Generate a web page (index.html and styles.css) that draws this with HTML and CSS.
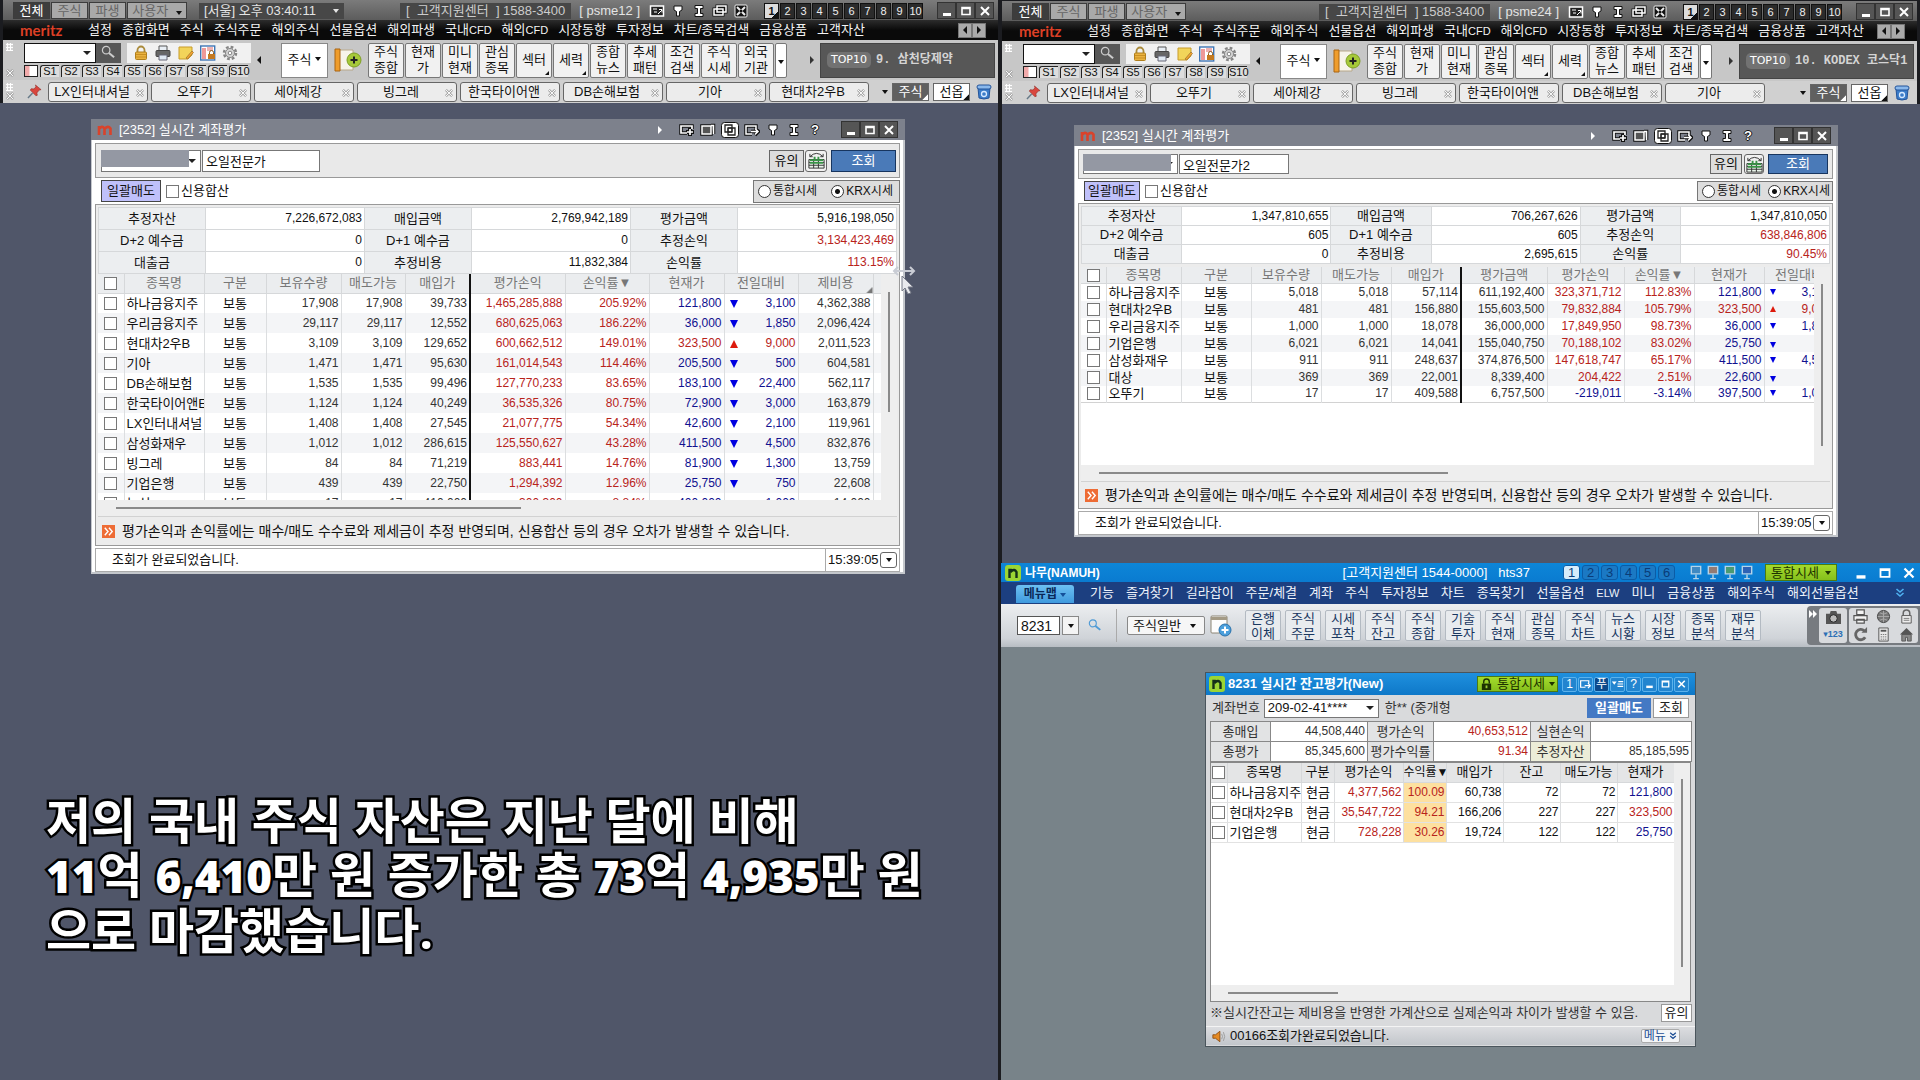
FILE: index.html
```html
<!DOCTYPE html>
<html lang="ko">
<head>
<meta charset="utf-8">
<title>실시간 계좌평가</title>
<link rel="stylesheet" href="styles.css">
</head>
<body>
<svg class="defs" aria-hidden="true">
  <symbol id="search" viewBox="0 0 16 16"><circle cx="5.500" cy="5.500" r="4" fill="none" stroke="currentColor" stroke-width="1.300"/><path d="M8.500 8.500 14 13" stroke="currentColor" stroke-width="2.200"/></symbol>
  <symbol id="lock" viewBox="0 0 16 16"><path d="M4.500 8V5a3.500 3.500 0 0 1 7 0v3" fill="none" stroke="#a98a3a" stroke-width="1.800"/><rect x="2.500" y="7" width="11" height="7.500" rx="1" fill="#e9b23f" stroke="#b07f1c"/><path d="M3 9.500h10M3 12h10" stroke="#c98f22"/></symbol>
  <symbol id="printer" viewBox="0 0 16 16"><path d="M4 1h8v5H4z" fill="#e8eef4" stroke="#555"/><rect x="1" y="5.500" width="14" height="6" rx="1" fill="#666" stroke="#444"/><path d="M4 10h8v5H4z" fill="#dfe8f2" stroke="#667"/></symbol>
  <symbol id="note" viewBox="0 0 16 16"><path d="M1 2h13v8l-4 4H1z" fill="#f2d45a" stroke="#c79b2b"/><path d="m8 13 6-7 1.500 1.500-6 6.500z" fill="#f7a531" stroke="#85622a" stroke-width=".6"/></symbol>
  <symbol id="doclock" viewBox="0 0 16 16"><rect x=".7" y="1" width="14" height="14" fill="#fff" stroke="#3f76b5" stroke-width="1.400"/><path d="M2 3h4v11H2z" fill="#e99"/><path d="M7 3h6M7 5h6" stroke="#d66"/><rect x="8" y="9" width="7" height="5" fill="#c47a21"/><path d="M9.500 9V7.500a2 2 0 0 1 4 0V9" fill="none" stroke="#8a5a1c"/></symbol>
  <symbol id="gear" viewBox="0 0 16 16"><circle cx="8" cy="8" r="6" fill="none" stroke="#858585" stroke-width="2.500" stroke-dasharray="2.700 2"/><circle cx="8" cy="8" r="4.500" fill="#d5d5d5" stroke="#858585"/><circle cx="8" cy="8" r="1.800" fill="#fff" stroke="#858585"/></symbol>
  <symbol id="book" viewBox="0 0 28 24"><path d="M2 2h17v20H2z" fill="#f7f4ea" stroke="#b8a88a"/><path d="M1 1h5v22H1z" fill="#ef9d2c" stroke="#a96512"/><circle cx="20" cy="12" r="7" fill="#a6c939" stroke="#7f9f25"/><path d="M20 8.500v7M16.500 12h7" stroke="#222" stroke-width="2"/></symbol>
  <symbol id="pin" viewBox="0 0 16 16"><path d="m9 1 6 5-2 .5-2.500 3L11 12l-1.500.5-6-6L4.500 5l3 .3L9.500 3z" fill="#d9463d" stroke="#8d2520" stroke-width=".6"/><path d="M6 9.500 1 15" stroke="#677a88" stroke-width="1.500"/></symbol>
  <symbol id="bin" viewBox="0 0 16 16"><path d="M2 4h12l-1 10q-5 2-10 0z" fill="#3b7cc9" stroke="#24549a"/><rect x="1" y="1" width="14" height="4" rx="2" fill="#8bb9ec" stroke="#24549a"/><circle cx="8" cy="10" r="2.500" fill="none" stroke="#d8eaff" stroke-width="1.300"/></symbol>
  <symbol id="cam" viewBox="0 0 16 14"><rect x="1.500" y="2" width="13" height="10" fill="#222" stroke="#fff" stroke-width="1.500"/><path d="M4 5h4M5 8h3M9 10l4-4M10 5.500h3v3" stroke="#fff"/></symbol>
  <symbol id="tack" viewBox="0 0 16 14"><path d="M4 2h8v4L9.500 7.500V12h-3V7.500L4 6z" fill="#fff" stroke="#111"/></symbol>
  <symbol id="tee" viewBox="0 0 16 14"><path d="M4 1.500h8v3H9.500v5H12v3H4v-3h2.500v-5H4z" fill="#fff" stroke="#111"/></symbol>
  <symbol id="copy" viewBox="0 0 16 14"><path d="M5 2h9v6H5zM2 5h9v6H2z" fill="#222" stroke="#111" stroke-width="3"/><path d="M5 2h9v6H5zM2 5h9v6H2z" fill="none" stroke="#fff" stroke-width="1.500"/></symbol>
  <symbol id="fit" viewBox="0 0 16 14"><rect x="2" y="1" width="12" height="12" rx="1" fill="#111" stroke="#eee"/><path d="m4 3 8 8m0-8-8 8" stroke="#eee" stroke-width="2"/><circle cx="8" cy="7" r="1.500" fill="#111"/></symbol>
  <symbol id="winadd" viewBox="0 0 16 14"><path d="M8 10H2V3h11v3" fill="none" stroke="#111" stroke-width="3.500"/><path d="M11 5v8M7 9h8" stroke="#111" stroke-width="4"/><path d="M8 10H2V3h11v3M11 6v6M8 9h6" fill="none" stroke="#fff" stroke-width="1.700"/></symbol>
  <symbol id="winone" viewBox="0 0 16 14"><path d="M2 3h9v8H2zM11 2.500h2.500V11" fill="none" stroke="#111" stroke-width="3.500"/><path d="M2 3h9v8H2zM11 2.500h2.500V11" fill="#555" stroke="#fff" stroke-width="1.500"/></symbol>
  <symbol id="windup" viewBox="0 0 18 16"><rect x=".5" y=".5" width="17" height="15" rx="3" fill="#fff" stroke="#111"/><path d="M4 3h7v7H4zM7 6h7v7H7z" fill="#fff" stroke="#222" stroke-width="1.300"/><path d="M7 6h4v4H7z" fill="none" stroke="#222"/></symbol>
  <symbol id="wingo" viewBox="0 0 16 14"><path d="M8 11H2V3h10v3M7 8.500h7M11 5l3.500 3.500L11 12" fill="none" stroke="#111" stroke-width="3.500"/><path d="M8 11H2V3h10v3M7 8.500h7M11 5.500l3 3-3 3" fill="none" stroke="#fff" stroke-width="1.500"/></symbol>
  <symbol id="goto" viewBox="0 0 16 14"><path d="M8 11H2V3h10v3M7 9h7M11 6l3 3-3 3" fill="none" stroke="#fff" stroke-width="1.500"/></symbol>
  <symbol id="list" viewBox="0 0 16 14"><path d="M1 4h6L4 8z" fill="#fff"/><path d="M9 4h6M8 7h7M8 10h7" stroke="#fff" stroke-width="1.500"/></symbol>
  <symbol id="min" viewBox="0 0 16 14"><path d="M4 10.500h8" stroke="currentColor" stroke-width="3"/></symbol>
  <symbol id="max" viewBox="0 0 16 14"><path d="M4 3.500h8v7H4zM4 4.500h8" fill="none" stroke="currentColor" stroke-width="1.600"/></symbol>
  <symbol id="close" viewBox="0 0 16 14"><path d="m4 3 8 8m0-8-8 8" stroke="currentColor" stroke-width="2"/></symbol>
  <symbol id="calc" viewBox="0 0 20 20"><path d="M2 18V9h16v9z" fill="#e9f4ea" stroke="#333"/><path d="M2 12h16M2 15h16M7 9v9M12 9v9" stroke="#333"/><path d="M3 9.500h14M3 12.500h14" stroke="#3a9448" stroke-width="1.800"/><path d="M3 6q7-7 14 0M3 3v3h3M17 3v3h-3" fill="none" stroke="#333"/><path d="M7 6h2v3H7zM11 6h2v3h-2z" fill="#3a9448"/></symbol>
  <symbol id="next" viewBox="0 0 14 14"><path d="M0 0h14v14H0z" fill="#ee6c35"/><path d="m3 3 3.500 4L3 11M7.500 3 11 7l-3.500 4" fill="none" stroke="#fff" stroke-width="1.500"/></symbol>
  <symbol id="nlogo" viewBox="0 0 16 16"><rect width="16" height="16" rx="3" fill="#9bd534"/><path d="M4.500 13V5h1.500l.5 1q3-2.500 5 1v6" fill="none" stroke="#14301a" stroke-width="2.400"/></symbol>
  <symbol id="mlogo" viewBox="0 0 16 12"><path d="M2 11V2M2 5q3-4 5.500-.5V11M7.500 5q3.500-4 6-.5V11" fill="none" stroke="#d9432b" stroke-width="2.600"/></symbol>
  <symbol id="monitor" viewBox="0 0 14 16"><path d="M2 1.500h10v8H2z" fill="currentColor" stroke="#b5d3e8" stroke-width="1.500"/><path d="M7 10v4M4 14.500h6" stroke="#b5d3e8" stroke-width="1.500"/></symbol>
  <symbol id="winplus" viewBox="0 0 22 22"><rect x="1" y="1" width="16" height="17" rx="1" fill="#fdfdfd" stroke="#8c8575"/><path d="M1 3.500h16" stroke="#a49b86" stroke-width="3"/><circle cx="15" cy="15" r="6" fill="#4b9fdc" stroke="#2b72ab"/><path d="M15 11.500v7M11.500 15h7" stroke="#fff" stroke-width="2"/></symbol>
  <symbol id="camera" viewBox="0 0 18 16"><path d="M1 4h4l1-3h6l1 3h4v11H1z" fill="#555"/><circle cx="9" cy="9" r="4" fill="#bbb" stroke="#222"/></symbol>
  <symbol id="gprint" viewBox="0 0 16 16"><path d="M4 1h8v5H4zM1 7h14v5H1zM4 11h8v4H4z" fill="#f4f4f4" stroke="#555" stroke-width="1.300"/></symbol>
  <symbol id="globe" viewBox="0 0 16 16"><circle cx="8" cy="8" r="6.500" fill="#777" stroke="#444"/><path d="M2 8h12M8 2v12M4 4q4 3 8 0M4 12q4-3 8 0" stroke="#aaa" fill="none"/></symbol>
  <symbol id="glock" viewBox="0 0 16 16"><path d="M4.500 7V4.500a3.500 3.500 0 0 1 7 0V7" fill="none" stroke="#666" stroke-width="1.600"/><path d="M3 7h10v8H3z" fill="#eee" stroke="#555"/><path d="M5 10h6M5 12h6" stroke="#777"/></symbol>
  <symbol id="redo" viewBox="0 0 16 16"><path d="M12 4a5.500 5.500 0 1 0 1 7" fill="none" stroke="#666" stroke-width="3"/><path d="M9 6h6V0z" fill="#666"/></symbol>
  <symbol id="gcalc" viewBox="0 0 16 16"><path d="M3 1h10v14H3z" fill="#e8e8e8" stroke="#555"/><path d="M5 4h6" stroke="#555" stroke-width="2"/><path d="M5 8h6M5 10.500h6M5 13h6" stroke="#777" stroke-dasharray="1.500 .8"/></symbol>
  <symbol id="home" viewBox="0 0 16 16"><path d="m1 8 7-7 7 7z" fill="#555"/><path d="M3 8h10v7H9v-4H7v4H3z" fill="#888" stroke="#555"/></symbol>
  <symbol id="speaker" viewBox="0 0 16 14"><path d="M1 5h3l5-4v12L4 9H1z" fill="#e58a23" stroke="#8a4d12"/><path d="M11 4q2 3 0 6M13 2q3 5 0 10" fill="none" stroke="#999"/></symbol>
  <symbol id="chev" viewBox="0 0 10 10"><path d="m1.500 1 3.500 3 3.500-3M1.500 5 5 8l3.500-3" fill="none" stroke="currentColor" stroke-width="1.600"/></symbol>
  <symbol id="xdots" viewBox="0 0 9 9"><path d="m1 1 7 7m0-7-7 7" stroke="#888" stroke-width="2.600"/><path d="m1 1 7 7m0-7-7 7" stroke="#fff" stroke-width="1.200"/></symbol>
</svg>

<main class="screens">
<!-- Account psme12 -->
<section class="screen meritz">
  <header class="top">
    <div class="tabs"><button class="on">전체</button><button>주식</button><button>파생</button><button class="wide">사용자 <i class="tri"></i></button></div>
    <div class="clock">[서울] 오후 03:40:11 <i class="tri"></i></div>
    <div class="support"><span class="box">[ &nbsp;고객지원센터&nbsp; ] 1588-3400</span><span>[ psme12 ]</span></div>
    <div class="sysicons"><svg><use href="#cam"/></svg><svg><use href="#tack"/></svg><svg><use href="#tee"/></svg><svg><use href="#copy"/></svg><svg><use href="#fit"/></svg></div>
    <div class="pages"><button class="on">1</button><button>2</button><button>3</button><button>4</button><button>5</button><button>6</button><button>7</button><button>8</button><button>9</button><button>10</button></div>
    <div class="winbtns"><button aria-label="최소화"><svg><use href="#min"/></svg></button><button aria-label="최대화"><svg><use href="#max"/></svg></button><button aria-label="닫기"><svg><use href="#close"/></svg></button></div>
  </header>
  <nav class="menu"><b class="brand">meritz</b><a href="#">설정</a><a href="#">종합화면</a><a href="#">주식</a><a href="#">주식주문</a><a href="#">해외주식</a><a href="#">선물옵션</a><a href="#">해외파생</a><a href="#">국내<span class="en">CFD</span></a><a href="#">해외<span class="en">CFD</span></a><a href="#">시장동향</a><a href="#">투자정보</a><a href="#">차트/종목검색</a><a href="#">금융상품</a><a href="#">고객자산</a><span class="pager"><button aria-label="이전"><i class="tri left"></i></button><button aria-label="다음"><i class="tri right"></i></button></span></nav>
  <div class="tools">
    <span class="grip"><svg><use href="#xdots"/></svg></span>
    <div class="finder">
      <div class="find"><select aria-label="화면번호"><option></option></select><button class="go" aria-label="검색"><svg><use href="#search"/></svg></button><span class="quick"><svg><use href="#lock"/></svg><svg><use href="#printer"/></svg><svg><use href="#note"/></svg><svg><use href="#doclock"/></svg><svg><use href="#gear"/></svg></span></div>
      <div class="slots"><i class="panes"></i><button>S1</button><button>S2</button><button>S3</button><button>S4</button><button>S5</button><button>S6</button><button>S7</button><button>S8</button><button>S9</button><button>S10</button></div>
    </div>
    <i class="tri left fold"></i>
    <button class="cat">주식<i class="tri"></i></button>
    <svg class="book"><use href="#book"/></svg>
    <div class="keys"><button>주식<br>종합</button><button>현재<br>가</button><button>미니<br>현재</button><button>관심<br>종목</button><button class="more">섹터</button><button class="more">세력</button><button>종합<br>뉴스</button><button>추세<br>패턴</button><button>조건<br>검색</button><button>주식<br>시세</button><button>외국<br>기관</button><button class="drop" aria-label="더보기"><i class="tri"></i></button></div>
    <i class="tri right unfold"></i>
    <div class="rank"><span>TOP10</span><b>9. 삼천당제약</b></div>
  </div>
  <div class="stocks">
    <span class="grip"><svg><use href="#xdots"/></svg></span><svg class="pin"><use href="#pin"/></svg>
    <div class="chips"><button>LX인터내셔널<svg><use href="#xdots"/></svg></button><button>오뚜기<svg><use href="#xdots"/></svg></button><button>세아제강<svg><use href="#xdots"/></svg></button><button>빙그레<svg><use href="#xdots"/></svg></button><button>한국타이어앤<svg><use href="#xdots"/></svg></button><button>DB손해보험<svg><use href="#xdots"/></svg></button><button>기아<svg><use href="#xdots"/></svg></button><button>현대차2우B<svg><use href="#xdots"/></svg></button></div>
    <span class="modes"><i class="tri"></i><button class="dark">주식</button><button>선옵</button><svg><use href="#bin"/></svg></span>
  </div>
  <div class="desk">
    <section class="win win-a">
      <header class="title"><svg class="m"><use href="#mlogo"/></svg><h2>[2352] 실시간 계좌평가</h2><i class="tri right"></i><span class="wicons"><svg><use href="#winadd"/></svg><svg><use href="#winone"/></svg><svg><use href="#windup"/></svg><svg><use href="#wingo"/></svg><svg><use href="#tack"/></svg><svg><use href="#tee"/></svg><b>?</b></span><span class="winbtns"><button aria-label="최소화"><svg><use href="#min"/></svg></button><button aria-label="최대화"><svg><use href="#max"/></svg></button><button aria-label="닫기"><svg><use href="#close"/></svg></button></span></header>
      <div class="body">
        <div class="acct"><span class="masked"><select aria-label="계좌"><option></option></select></span><input type="text" aria-label="계좌명" value="오일전문가"><span class="push"></span><button>유의</button><button class="ico" aria-label="계산"><svg><use href="#calc"/></svg></button><button class="query">조회</button></div>
        <div class="opts"><button class="sell">일괄매도</button><label><input type="checkbox">신용합산</label><span class="push"></span><span class="quote"><label><input type="radio" name="qa">통합시세</label><label><input type="radio" name="qa" checked>KRX시세</label></span></div>
        <div class="data">
          <table class="sum">
            <tr><th>추정자산</th><td>7,226,672,083</td><th>매입금액</th><td>2,769,942,189</td><th>평가금액</th><td>5,916,198,050</td></tr>
            <tr><th>D+2 예수금</th><td>0</td><th>D+1 예수금</th><td>0</td><th>추정손익</th><td class="r">3,134,423,469</td></tr>
            <tr><th>대출금</th><td>0</td><th>추정비용</th><td>11,832,384</td><th>손익률</th><td class="r">113.15%</td></tr>
          </table>
          <div class="pane">
            <div class="view">
              <table class="list">
                <colgroup><col class="w26"><col class="w80"><col class="w62"><col class="w75"><col class="w64"><col class="w65"><col class="w95"><col class="w84"><col class="w75"><col class="w74"><col class="w75"><col class="w26"></colgroup>
                <thead><tr><th><input type="checkbox" aria-label="전체"></th><th>종목명</th><th>구분</th><th>보유수량</th><th>매도가능</th><th class="edge">매입가</th><th>평가손익</th><th>손익률▼</th><th>현재가</th><th>전일대비</th><th class="fold-mark">제비용</th><th></th></tr></thead>
                <tbody>
                <tr><td><input type="checkbox" aria-label="선택"></td><td>하나금융지주</td><td>보통</td><td>17,908</td><td>17,908</td><td class="edge">39,733</td><td class="r">1,465,285,888</td><td class="r">205.92%</td><td class="b">121,800</td><td class="b"><i class="dn"></i>3,100</td><td>4,362,388</td><td></td></tr>
                <tr><td><input type="checkbox" aria-label="선택"></td><td>우리금융지주</td><td>보통</td><td>29,117</td><td>29,117</td><td class="edge">12,552</td><td class="r">680,625,063</td><td class="r">186.22%</td><td class="b">36,000</td><td class="b"><i class="dn"></i>1,850</td><td>2,096,424</td><td></td></tr>
                <tr><td><input type="checkbox" aria-label="선택"></td><td>현대차2우B</td><td>보통</td><td>3,109</td><td>3,109</td><td class="edge">129,652</td><td class="r">600,662,512</td><td class="r">149.01%</td><td class="r">323,500</td><td class="r"><i class="up"></i>9,000</td><td>2,011,523</td><td></td></tr>
                <tr><td><input type="checkbox" aria-label="선택"></td><td>기아</td><td>보통</td><td>1,471</td><td>1,471</td><td class="edge">95,630</td><td class="r">161,014,543</td><td class="r">114.46%</td><td class="b">205,500</td><td class="b"><i class="dn"></i>500</td><td>604,581</td><td></td></tr>
                <tr><td><input type="checkbox" aria-label="선택"></td><td>DB손해보험</td><td>보통</td><td>1,535</td><td>1,535</td><td class="edge">99,496</td><td class="r">127,770,233</td><td class="r">83.65%</td><td class="b">183,100</td><td class="b"><i class="dn"></i>22,400</td><td>562,117</td><td></td></tr>
                <tr><td><input type="checkbox" aria-label="선택"></td><td>한국타이어앤E</td><td>보통</td><td>1,124</td><td>1,124</td><td class="edge">40,249</td><td class="r">36,535,326</td><td class="r">80.75%</td><td class="b">72,900</td><td class="b"><i class="dn"></i>3,000</td><td>163,879</td><td></td></tr>
                <tr><td><input type="checkbox" aria-label="선택"></td><td>LX인터내셔널</td><td>보통</td><td>1,408</td><td>1,408</td><td class="edge">27,545</td><td class="r">21,077,775</td><td class="r">54.34%</td><td class="b">42,600</td><td class="b"><i class="dn"></i>2,100</td><td>119,961</td><td></td></tr>
                <tr><td><input type="checkbox" aria-label="선택"></td><td>삼성화재우</td><td>보통</td><td>1,012</td><td>1,012</td><td class="edge">286,615</td><td class="r">125,550,627</td><td class="r">43.28%</td><td class="b">411,500</td><td class="b"><i class="dn"></i>4,500</td><td>832,876</td><td></td></tr>
                <tr><td><input type="checkbox" aria-label="선택"></td><td>빙그레</td><td>보통</td><td>84</td><td>84</td><td class="edge">71,219</td><td class="r">883,441</td><td class="r">14.76%</td><td class="b">81,900</td><td class="b"><i class="dn"></i>1,300</td><td>13,759</td><td></td></tr>
                <tr><td><input type="checkbox" aria-label="선택"></td><td>기업은행</td><td>보통</td><td>439</td><td>439</td><td class="edge">22,750</td><td class="r">1,294,392</td><td class="r">12.96%</td><td class="b">25,750</td><td class="b"><i class="dn"></i>750</td><td>22,608</td><td></td></tr>
                <tr><td><input type="checkbox" aria-label="선택"></td><td>농심</td><td>보통</td><td>17</td><td>17</td><td class="edge">410,000</td><td class="r">300,300</td><td class="r">8.84%</td><td class="b">400,000</td><td class="b"><i class="dn"></i>1,000</td><td>14,000</td><td></td></tr>
                </tbody>
              </table>
            </div>
            <i class="vbar"></i><i class="hbar"></i>
          </div>
          <p class="notice"><svg><use href="#next"/></svg>평가손익과 손익률에는 매수/매도 수수료와 제세금이 추정 반영되며, 신용합산 등의 경우 오차가 발생할 수 있습니다.</p>
        </div>
        <footer class="status"><span>조회가 완료되었습니다.</span><time>15:39:05<button aria-label="기록"><i class="tri"></i></button></time></footer>
      </div>
      <svg class="cursor" viewBox="0 0 24 28"><path d="M2 5h20M6 1 2 5l4 4M18 1l4 4-4 4" fill="none" stroke="#c9ccd4" stroke-width="2"/><path d="M10 10v15l3-3 3 6 3-1-3-6h5z" fill="#e9eaee" stroke="#777b88"/></svg>
    </section>
    <p class="caption">저의 국내 주식 자산은 지난 달에 비해<br><span>11</span>억 <span>6,410</span>만 원 증가한 총 <span>73</span>억 <span>4,935</span>만 원<br>으로 마감했습니다.</p>
  </div>
</section>

<div class="right">
<!-- Account psme24 -->
<section class="screen meritz">
  <header class="top">
    <div class="tabs"><button class="on">전체</button><button>주식</button><button>파생</button><button class="wide">사용자 <i class="tri"></i></button></div>
    <div class="support"><span class="box">[ &nbsp;고객지원센터&nbsp; ] 1588-3400</span><span>[ psme24 ]</span></div>
    <div class="sysicons"><svg><use href="#cam"/></svg><svg><use href="#tack"/></svg><svg><use href="#tee"/></svg><svg><use href="#copy"/></svg><svg><use href="#fit"/></svg></div>
    <div class="pages"><button class="on">1</button><button>2</button><button>3</button><button>4</button><button>5</button><button>6</button><button>7</button><button>8</button><button>9</button><button>10</button></div>
    <div class="winbtns"><button aria-label="최소화"><svg><use href="#min"/></svg></button><button aria-label="최대화"><svg><use href="#max"/></svg></button><button aria-label="닫기"><svg><use href="#close"/></svg></button></div>
  </header>
  <nav class="menu"><b class="brand">meritz</b><a href="#">설정</a><a href="#">종합화면</a><a href="#">주식</a><a href="#">주식주문</a><a href="#">해외주식</a><a href="#">선물옵션</a><a href="#">해외파생</a><a href="#">국내<span class="en">CFD</span></a><a href="#">해외<span class="en">CFD</span></a><a href="#">시장동향</a><a href="#">투자정보</a><a href="#">차트/종목검색</a><a href="#">금융상품</a><a href="#">고객자산</a><span class="pager"><button aria-label="이전"><i class="tri left"></i></button><button aria-label="다음"><i class="tri right"></i></button></span></nav>
  <div class="tools">
    <span class="grip"><svg><use href="#xdots"/></svg></span>
    <div class="finder">
      <div class="find"><select aria-label="화면번호"><option></option></select><button class="go" aria-label="검색"><svg><use href="#search"/></svg></button><span class="quick"><svg><use href="#lock"/></svg><svg><use href="#printer"/></svg><svg><use href="#note"/></svg><svg><use href="#doclock"/></svg><svg><use href="#gear"/></svg></span></div>
      <div class="slots"><i class="panes"></i><button>S1</button><button>S2</button><button>S3</button><button>S4</button><button>S5</button><button>S6</button><button>S7</button><button>S8</button><button>S9</button><button>S10</button></div>
    </div>
    <i class="tri left fold"></i>
    <button class="cat">주식<i class="tri"></i></button>
    <svg class="book"><use href="#book"/></svg>
    <div class="keys"><button>주식<br>종합</button><button>현재<br>가</button><button>미니<br>현재</button><button>관심<br>종목</button><button class="more">섹터</button><button class="more">세력</button><button>종합<br>뉴스</button><button>추세<br>패턴</button><button>조건<br>검색</button><button class="drop" aria-label="더보기"><i class="tri"></i></button></div>
    <i class="tri right unfold"></i>
    <div class="rank"><span>TOP10</span><b>10. KODEX 코스닥1</b></div>
  </div>
  <div class="stocks">
    <span class="grip"><svg><use href="#xdots"/></svg></span><svg class="pin"><use href="#pin"/></svg>
    <div class="chips"><button>LX인터내셔널<svg><use href="#xdots"/></svg></button><button>오뚜기<svg><use href="#xdots"/></svg></button><button>세아제강<svg><use href="#xdots"/></svg></button><button>빙그레<svg><use href="#xdots"/></svg></button><button>한국타이어앤<svg><use href="#xdots"/></svg></button><button>DB손해보험<svg><use href="#xdots"/></svg></button><button>기아<svg><use href="#xdots"/></svg></button></div>
    <span class="modes"><i class="tri"></i><button class="dark">주식</button><button>선옵</button><svg><use href="#bin"/></svg></span>
  </div>
  <div class="desk">
    <section class="win win-b">
      <header class="title"><svg class="m"><use href="#mlogo"/></svg><h2>[2352] 실시간 계좌평가</h2><i class="tri right"></i><span class="wicons"><svg><use href="#winadd"/></svg><svg><use href="#winone"/></svg><svg><use href="#windup"/></svg><svg><use href="#wingo"/></svg><svg><use href="#tack"/></svg><svg><use href="#tee"/></svg><b>?</b></span><span class="winbtns"><button aria-label="최소화"><svg><use href="#min"/></svg></button><button aria-label="최대화"><svg><use href="#max"/></svg></button><button aria-label="닫기"><svg><use href="#close"/></svg></button></span></header>
      <div class="body">
        <div class="acct"><span class="masked"><select aria-label="계좌"><option></option></select></span><input type="text" aria-label="계좌명" value="오일전문가2"><span class="push"></span><button>유의</button><button class="ico" aria-label="계산"><svg><use href="#calc"/></svg></button><button class="query">조회</button></div>
        <div class="opts"><button class="sell">일괄매도</button><label><input type="checkbox">신용합산</label><span class="push"></span><span class="quote"><label><input type="radio" name="qb">통합시세</label><label><input type="radio" name="qb" checked>KRX시세</label></span></div>
        <div class="data">
          <table class="sum">
            <tr><th>추정자산</th><td>1,347,810,655</td><th>매입금액</th><td>706,267,626</td><th>평가금액</th><td>1,347,810,050</td></tr>
            <tr><th>D+2 예수금</th><td>605</td><th>D+1 예수금</th><td>605</td><th>추정손익</th><td class="r">638,846,806</td></tr>
            <tr><th>대출금</th><td>0</td><th>추정비용</th><td>2,695,615</td><th>손익률</th><td class="r">90.45%</td></tr>
          </table>
          <div class="pane">
            <div class="view">
              <table class="list">
                <colgroup><col class="w25"><col class="w75"><col class="w70"><col class="w70"><col class="w70"><col class="w70"><col class="w86"><col class="w77"><col class="w70"><col class="w70"><col class="w70"></colgroup>
                <thead><tr><th><input type="checkbox" aria-label="전체"></th><th>종목명</th><th>구분</th><th>보유수량</th><th>매도가능</th><th class="edge">매입가</th><th>평가금액</th><th>평가손익</th><th>손익률▼</th><th>현재가</th><th>전일대비</th></tr></thead>
                <tbody>
                <tr><td><input type="checkbox" aria-label="선택"></td><td>하나금융지주</td><td>보통</td><td>5,018</td><td>5,018</td><td class="edge">57,114</td><td>611,192,400</td><td class="r">323,371,712</td><td class="r">112.83%</td><td class="b">121,800</td><td class="b"><i class="dn"></i>3,100</td></tr>
                <tr><td><input type="checkbox" aria-label="선택"></td><td>현대차2우B</td><td>보통</td><td>481</td><td>481</td><td class="edge">156,880</td><td>155,603,500</td><td class="r">79,832,884</td><td class="r">105.79%</td><td class="r">323,500</td><td class="r"><i class="up"></i>9,000</td></tr>
                <tr><td><input type="checkbox" aria-label="선택"></td><td>우리금융지주</td><td>보통</td><td>1,000</td><td>1,000</td><td class="edge">18,078</td><td>36,000,000</td><td class="r">17,849,950</td><td class="r">98.73%</td><td class="b">36,000</td><td class="b"><i class="dn"></i>1,850</td></tr>
                <tr><td><input type="checkbox" aria-label="선택"></td><td>기업은행</td><td>보통</td><td>6,021</td><td>6,021</td><td class="edge">14,041</td><td>155,040,750</td><td class="r">70,188,102</td><td class="r">83.02%</td><td class="b">25,750</td><td class="b"><i class="dn"></i></td></tr>
                <tr><td><input type="checkbox" aria-label="선택"></td><td>삼성화재우</td><td>보통</td><td>911</td><td>911</td><td class="edge">248,637</td><td>374,876,500</td><td class="r">147,618,747</td><td class="r">65.17%</td><td class="b">411,500</td><td class="b"><i class="dn"></i>4,500</td></tr>
                <tr><td><input type="checkbox" aria-label="선택"></td><td>대상</td><td>보통</td><td>369</td><td>369</td><td class="edge">22,001</td><td>8,339,400</td><td class="r">204,422</td><td class="r">2.51%</td><td class="b">22,600</td><td class="b"><i class="dn"></i></td></tr>
                <tr><td><input type="checkbox" aria-label="선택"></td><td>오뚜기</td><td>보통</td><td>17</td><td>17</td><td class="edge">409,588</td><td>6,757,500</td><td class="b">-219,011</td><td class="b">-3.14%</td><td class="b">397,500</td><td class="b"><i class="dn"></i>1,000</td></tr>
                </tbody>
              </table>
            </div>
            <i class="vbar"></i><i class="hbar"></i>
          </div>
          <p class="notice"><svg><use href="#next"/></svg>평가손익과 손익률에는 매수/매도 수수료와 제세금이 추정 반영되며, 신용합산 등의 경우 오차가 발생할 수 있습니다.</p>
        </div>
        <footer class="status"><span>조회가 완료되었습니다.</span><time>15:39:05<button aria-label="기록"><i class="tri"></i></button></time></footer>
      </div>
    </section>
  </div>
</section>

<!-- Namuh account -->
<section class="screen namuh">
  <header class="ntop"><svg class="logo"><use href="#nlogo"/></svg><h1>나무(NAMUH)</h1><span class="line">[고객지원센터 1544-0000] &nbsp; hts37</span>
    <div class="npages"><button class="on">1</button><button>2</button><button>3</button><button>4</button><button>5</button><button>6</button></div>
    <div class="mons"><svg class="m1"><use href="#monitor"/></svg><svg class="m2"><use href="#monitor"/></svg><svg class="m3"><use href="#monitor"/></svg><svg class="m4"><use href="#monitor"/></svg></div>
    <button class="green">통합시세<i class="tri"></i></button>
    <div class="nbtns"><button aria-label="최소화"><svg><use href="#min"/></svg></button><button aria-label="최대화"><svg><use href="#max"/></svg></button><button aria-label="닫기"><svg><use href="#close"/></svg></button></div>
  </header>
  <nav class="nmenu"><button>메뉴맵 <i class="tri"></i></button><a href="#">기능</a><a href="#">즐겨찾기</a><a href="#">길라잡이</a><a href="#">주문/체결</a><a href="#">계좌</a><a href="#">주식</a><a href="#">투자정보</a><a href="#">차트</a><a href="#">종목찾기</a><a href="#">선물옵션</a><a href="#"><span class="en">ELW</span></a><a href="#">미니</a><a href="#">금융상품</a><a href="#">해외주식</a><a href="#">해외선물옵션</a><svg><use href="#chev"/></svg></nav>
  <div class="ntools">
    <input class="code" type="text" aria-label="화면번호" value="8231"><button class="drop" aria-label="목록"><i class="tri"></i></button><svg class="mag"><use href="#search"/></svg>
    <i class="sep"></i>
    <button class="ncat">주식일반<i class="tri"></i></button><svg class="np"><use href="#winplus"/></svg>
    <div class="nkeys"><button>은행<br>이체</button><button>주식<br>주문</button><button>시세<br>포착</button><button>주식<br>잔고</button><button>주식<br>종합</button><button>기술<br>투자</button><button>주식<br>현재</button><button>관심<br>종목</button><button>주식<br>차트</button><button>뉴스<br>시황</button><button>시장<br>정보</button><button>종목<br>분석</button><button>재무<br>분석</button></div>
    <div class="dock"><span class="ff"><i class="tri right"></i><i class="tri right"></i></span><span class="d1"><svg><use href="#camera"/></svg><b>▾123</b></span><span class="d2"><svg><use href="#gprint"/></svg><svg><use href="#globe"/></svg><svg><use href="#glock"/></svg><svg><use href="#redo"/></svg><svg><use href="#gcalc"/></svg><svg><use href="#home"/></svg></span></div>
  </div>
  <div class="desk">
    <section class="win win-c">
      <header class="ctitle"><svg class="logo"><use href="#nlogo"/></svg><h2>8231 실시간 잔고평가(New)</h2><button class="green"><svg viewBox="0 0 14 14"><path d="M4 6V4a3 3 0 0 1 6 0v2" fill="none" stroke="#1d3300" stroke-width="1.500"/><path d="M2 6h10v7H2z" fill="#1d3300"/><path d="M7 8v3" stroke="#9c3" stroke-width="2"/></svg>통합시세<i class="tri"></i></button>
        <span class="cbtns"><button>1</button><button aria-label="이동"><svg><use href="#goto"/></svg></button><button class="on">푸</button><button aria-label="목록"><svg><use href="#list"/></svg></button><button>?</button><button aria-label="최소화"><svg><use href="#min"/></svg></button><button aria-label="최대화"><svg><use href="#max"/></svg></button><button aria-label="닫기"><svg><use href="#close"/></svg></button></span></header>
      <div class="cacct"><label for="acc">계좌번호</label><select id="acc"><option>209-02-41****</option></select><span class="owner">한** (중개형</span><span class="push"></span><button class="csell">일괄매도</button><button class="plain">조회</button></div>
      <table class="csum">
        <colgroup><col class="p1"><col class="p2"><col class="p3"><col class="p2"><col class="p1"><col class="p4"></colgroup>
        <tr><th>총매입</th><td>44,508,440</td><th>평가손익</th><td class="r">40,653,512</td><th>실현손익</th><td></td></tr>
        <tr><th>총평가</th><td>85,345,600</td><th>평가수익률</th><td class="r">91.34</td><th class="mark">추정자산</th><td>85,185,595</td></tr>
      </table>
      <div class="pane">
        <div class="view">
          <table class="list">
            <colgroup><col class="w16"><col class="w74"><col class="w33"><col class="w69"><col class="w43"><col class="w57"><col class="w57"><col class="w57"><col class="w57"></colgroup>
            <thead><tr><th><input type="checkbox" aria-label="전체"></th><th>종목명</th><th>구분</th><th>평가손익</th><th class="tight">수익률▼</th><th>매입가</th><th>잔고</th><th>매도가능</th><th>현재가</th></tr></thead>
            <tbody>
            <tr><td><input type="checkbox" aria-label="선택"></td><td>하나금융지주</td><td>현금</td><td class="r">4,377,562</td><td class="r hot">100.09</td><td>60,738</td><td>72</td><td>72</td><td class="b">121,800</td></tr>
            <tr><td><input type="checkbox" aria-label="선택"></td><td>현대차2우B</td><td>현금</td><td class="r">35,547,722</td><td class="r hot">94.21</td><td>166,206</td><td>227</td><td>227</td><td class="r">323,500</td></tr>
            <tr><td><input type="checkbox" aria-label="선택"></td><td>기업은행</td><td>현금</td><td class="r">728,228</td><td class="r hot">30.26</td><td>19,724</td><td>122</td><td>122</td><td class="b">25,750</td></tr>
            </tbody>
          </table>
        </div>
        <i class="vbar"></i><i class="hbar"></i>
      </div>
      <p class="cnote"><span>※실시간잔고는 제비용을 반영한 가계산으로 실제손익과 차이가 발생할 수 있음.</span><button class="plain">유의</button></p>
      <footer class="cstatus"><svg><use href="#speaker"/></svg>00166조회가완료되었습니다.<span class="push"></span><button>메뉴 <svg><use href="#chev"/></svg></button></footer>
    </section>
  </div>
</section>
</div>
</main>
</body>
</html>
```
FILE: styles.css
```css
* { box-sizing: border-box; }
body {
  margin: 0;
  background: #1b1c20;
  color: #111;
  font: 13px/16px "Liberation Sans", "Noto Sans CJK KR", sans-serif;
}
button, input, select { font: inherit; color: inherit; margin: 0; padding: 0; border-radius: 0; }
button { border: 1px solid #666; background: #eee; white-space: nowrap; }
a { color: inherit; text-decoration: none; }
h1, h2, p { margin: 0; font-size: inherit; font-weight: normal; }
svg { flex: none; }
.defs { display: none; }
.push { flex: 1; }
.en { font-size: 11px; }

.tri { display: inline-block; flex: none; border: 3px solid transparent; border-top: 4px solid currentColor; border-bottom: 0; }
.tri.left { border: 4px solid transparent; border-right-color: currentColor; border-left: 0; }
.tri.right { border: 4px solid transparent; border-left-color: currentColor; border-right: 0; }

input[type=checkbox], input[type=radio] { appearance: none; flex: none; width: 13px; height: 13px; border: 1px solid #777; background: #fff; display: block; }
input[type=radio] { border-radius: 50%; border-color: #333; }
input[type=radio]:checked { background: radial-gradient(#111 2px, #fff 3px); }
select {
  appearance: none;
  border: 1px solid #777;
  background: #fff url("data:image/svg+xml,%3Csvg xmlns='http://www.w3.org/2000/svg' width='15' height='8'%3E%3Cpath d='M3 2h8l-4 4z' fill='%23222'/%3E%3C/svg%3E") right center no-repeat;
}

.screens { display: grid; grid-template-columns: 1001fr 919fr; min-height: 100vh; }
.right { display: grid; grid-template-rows: 563fr 517fr; }
.screen { display: flex; flex-direction: column; min-width: 0; }
.meritz { padding: 0 3px; }
.right .meritz { padding: 1px 3px 0 1px; }
.desk { position: relative; flex: 1; background: #505669; }
.meritz .desk { margin: 0 0 0 -3px; }
.right .meritz .desk { margin: 0 -3px 0 0; }

/* title bar */
.top { display: flex; align-items: center; height: 20px; padding: 1px 4px 0 10px; background: linear-gradient(#7b7b7b, #5c5c5c); color: #e4e4e4; }
.tabs { display: flex; gap: 1px; }
.tabs button { width: 37px; height: 17px; line-height: 15px; border-color: #3c3c3c; background: #a9a9a9; color: #666; }
.tabs .wide { width: 60px; }
.tabs .wide .tri { color: #111; margin-left: 4px; }
.tabs .on { background: #3d3d3d; color: #fff; }
.clock { margin-left: 12px; padding: 0 5px; width: 145px; height: 16px; background: #474747; display: flex; align-items: center; justify-content: space-between; white-space: nowrap; }
.support { margin-left: auto; display: flex; gap: 8px; white-space: nowrap; }
.support .box { background: #474747; padding: 0 6px; color: #ccc; }
.sysicons { display: flex; gap: 5px; margin: 0 15px 0 9px; }
.sysicons svg { width: 16px; height: 14px; }
.pages { display: flex; gap: 1px; }
.pages button { width: 15px; height: 16px; line-height: 14px; border-color: #111; background: #2b2b2b; color: #eee; font-size: 11px; }
.pages .on { background: linear-gradient(135deg, #ddd 75%, #111 76%); color: #111; font-weight: bold; }
.winbtns { display: flex; margin-left: 14px; }
.winbtns button { display: grid; place-items: center; width: 19px; height: 17px; border-color: #333; background: #555; color: #fff; }
.winbtns svg { width: 16px; height: 14px; }

/* menu bar */
.menu { display: flex; align-items: center; gap: 10px; height: 20px; padding: 0 12px 0 17px; background: linear-gradient(#2c2c2c, #0a0a0a 50%); color: #f4f4f4; white-space: nowrap; }
.brand { flex: none; width: 58px; font: bold 15px/18px "Lato", sans-serif; color: #dd4026; }
.pager { display: flex; margin-left: auto; }
.pager button { display: grid; place-items: center; width: 14px; height: 15px; background: #aaa; border-color: #777; color: #111; }

/* tool bar */
.tools { display: flex; align-items: center; height: 40px; padding-right: 3px; background: #c7c7c7; }
.grip { flex: none; width: 21px; align-self: stretch; display: flex; flex-direction: column; justify-content: space-between; padding: 3px; }
.grip::before { content: ""; width: 7px; height: 8px; background: radial-gradient(#fff 1px, #999 2px) 0 0 / 3px 3px; }
.grip svg { width: 8px; height: 8px; }
.finder { width: 227px; flex: none; }
.find { display: flex; height: 20px; }
.find select { width: 72px; border: 1px solid #111; }
.go { width: 25px; border: 0; background: #575757; color: #ccc; display: grid; place-items: center; }
.go svg { width: 15px; height: 15px; }
.quick { display: flex; flex: 1; align-items: center; justify-content: space-between; margin-left: 6px; padding: 0 13px 0 6px; background: #f1f1f1; }
.quick svg { width: 16px; height: 16px; }
.slots { display: flex; gap: 2px; height: 13px; margin-top: 2px; }
.panes { width: 14px; height: 12px; border: 1px solid #222; background: linear-gradient(90deg, #f1aaaa 4px, #fff 5px); }
.slots button { width: 19px; height: 12px; line-height: 11px; font-size: 11px; border: solid #222; border-width: 1px 0 0 1px; border-radius: 3px 0 0 0; background: #ddd; }
.fold { margin: 0 20px 0 6px; }
.cat { width: 47px; height: 35px; background: #fff; border-color: #888; flex: none; }
.cat .tri { margin: 0 0 3px 4px; }
.book { width: 28px; height: 24px; margin: 0 6px; }
.keys { display: flex; gap: 1px; }
.keys button { position: relative; width: 36px; height: 35px; border-radius: 2px; border-color: #777; background: #f1f1f1; }
.keys .more::after { content: ""; position: absolute; right: 2px; bottom: 2px; border: 2px solid #111; border-top-color: transparent; border-left-color: transparent; }
.keys .drop { width: 12px; background: #fff; }
.unfold { margin: 0 6px 0 auto; color: #333; }
.rank { display: flex; align-items: center; gap: 5px; width: 175px; height: 35px; padding: 0 6px; background: #575757; border: 1px solid #444; color: #d4d4d4; white-space: nowrap; overflow: hidden; }
.rank span { width: 44px; border-radius: 5px; background: #727272; color: #fff; text-align: center; font: 11px/16px "DejaVu Sans", sans-serif; flex: none; }
.rank b { font-family: "Liberation Mono", "Noto Sans CJK KR", monospace; font-size: 12px; }

.stocks { display: flex; align-items: center; height: 23px; padding-right: 6px; background: #d0d0d0; }
.right .stocks { padding-right: 7px; }
.stocks .pin { width: 15px; height: 15px; margin: 0 6px 0 3px; }
.chips { display: flex; gap: 3px; }
.chips button { position: relative; width: 100px; height: 20px; padding-right: 12px; border-radius: 3px; background: #ececec; overflow: hidden; }
.chips svg { position: absolute; right: 3px; top: 6px; width: 8px; height: 8px; }
.modes { display: flex; align-items: center; gap: 4px; margin-left: auto; }
.modes button { width: 37px; height: 18px; line-height: 16px; background: linear-gradient(135deg, #fff 88%, #111 89%); }
.modes .dark { background: linear-gradient(135deg, #606060 88%, #fff 89%); color: #fff; }
.modes svg { width: 16px; height: 16px; margin-left: 2px; }

/* document windows */
.win { position: absolute; background: #fff; }
.win-a { left: 91px; top: 16px; width: 814px; }
.win-b { left: 72px; top: 21px; width: 764px; }
.title { display: flex; align-items: center; height: 21px; padding: 0 7px 0 6px; background: #7d818c; color: #fff; }
.title .m { width: 16px; height: 12px; }
.title h2 { margin: 0 auto 0 6px; }
.title .winbtns { margin-left: 18px; }
.wicons { display: flex; align-items: center; gap: 5px; margin-left: 17px; }
.wicons svg { width: 16px; height: 14px; }
.wicons svg:nth-child(3) { width: 18px; height: 16px; }
.wicons b { width: 16px; text-align: center; text-shadow: 1px 0 #111, -1px 0 #111, 0 1px #111, 0 -1px #111; }
.body { padding: 3px 3px 0; border: 1px solid #c4c7cc; border-width: 0 2px 2px 1px; }
.acct { display: flex; align-items: center; gap: 1px; height: 35px; padding: 0 3px 0 5px; border: 1px solid #999; background: #e9e9e9; }
.acct button { height: 22px; width: 35px; background: #ddd; }
.acct .ico { display: grid; place-items: center; width: 22px; border-radius: 3px; background: #f2f2f2; }
.acct .ico svg { width: 19px; height: 19px; }
.acct .query { width: 65px; margin-left: 3px; background: #4a7ab8; border-color: #17355f; color: #fff; }
.acct input { width: 118px; height: 22px; padding: 0 3px; border: 1px solid #777; background: #fff; }
.masked { position: relative; width: 100px; height: 22px; }
.masked select { display: block; width: 100%; height: 100%; }
.masked::after { content: ""; position: absolute; left: 0; top: 0; width: 88px; height: 17px; background: #9498a3; }
.opts { display: flex; align-items: center; height: 26px; padding-left: 6px; gap: 5px; }
.sell { width: 60px; height: 22px; background: #bfc0fa; border-color: #444; }
.opts label { display: flex; align-items: center; gap: 2px; }
.quote { display: flex; gap: 14px; align-items: center; height: 23px; width: 147px; padding: 0 4px; border: 1px solid #777; background: #ddd; white-space: nowrap; font-size: 12px; }
.data { border: 1px solid #999; padding: 2px 2px 0; background: #ececec; }
table { border-collapse: collapse; table-layout: fixed; }
th { font-weight: normal; padding: 0; }
td { padding: 0 2px; text-align: right; font-size: 12px; line-height: 15px; }
.r { color: #b8231b; }
.b { color: #10108f; }
.sum { width: 100%; }
.sum th, .sum td { height: 22px; border: 1px solid #d6d8da; }
.sum th { width: 13.4%; background: #eceef0; }
.sum td { background: #fff; }
.pane { display: grid; grid-template-columns: 1fr 16px; grid-template-rows: auto 16px; background: #eee; }
.view { overflow: hidden; background: #fff; }
.list { width: 0; }
.list th { background: #ebedef; color: #777; border-right: 1px solid #d6d8da; border-bottom: 1px solid #d6d8da; white-space: nowrap; overflow: hidden; }
.list td { border-right: 1px solid #dcdee0; color: #333; white-space: nowrap; overflow: hidden; }
.list td.r { color: #b8231b; }
.list td.b { color: #10108f; }
.list tbody tr:nth-child(even) { background: #f4f5f7; }
.list td:nth-child(2), .list td:nth-child(3) { font-size: 13px; color: #111; }
.list td:nth-child(2) { text-align: left; }
.list td:nth-child(3) { text-align: center; }
.list input { margin: 0 auto; }
.list .edge { border-right: 2px solid #111; }
.dn, .up { float: left; margin: 4px 0 0 3px; border: 4px solid transparent; border-top: 8px solid #0000e0; border-bottom: 0; }
.up { border-top: 0; border-bottom: 8px solid #dd1a0c; }
.list .fold-mark { background: linear-gradient(135deg, #ebedef 93%, #777 94%); }
.vbar { width: 2px; background: #8a8a8a; justify-self: center; }
.hbar { height: 2px; background: #8a8a8a; align-self: center; }
.notice { display: flex; align-items: center; gap: 7px; height: 29px; padding-left: 4px; border-top: 1px solid #d2d2d2; font-size: 14px; white-space: nowrap; }
.notice svg { width: 13px; height: 13px; }
.status { display: flex; align-items: center; justify-content: space-between; height: 24px; margin-top: 2px; padding-left: 16px; border: 1px solid #aaa; background: #fff; }
.status time { display: flex; align-items: center; justify-content: space-between; width: 74px; align-self: stretch; padding: 0 2px; border-left: 1px solid #aaa; }
.status button { width: 17px; height: 16px; border-radius: 3px; background: #fff; display: grid; place-items: center; }
.win-a .list tbody tr { height: 20px; }
.win-a .list thead tr { height: 19px; }
.win-a .view { height: 226px; }
.win-a .vbar { margin: 18px 0 88px; }
.win-a .hbar { width: 405px; margin-left: 18px; }

.win-b .acct { height: 30px; padding: 0 4px; }
.win-b .acct button { height: 20px; width: 32px; }
.win-b .acct .ico { width: 20px; margin-left: 1px; }
.win-b .acct .query { width: 60px; }
.win-b .acct input { width: 110px; height: 20px; }
.win-b .masked { width: 95px; height: 20px; }
.win-b .opts { height: 24px; }
.win-b .sell { width: 56px; height: 20px; }
.win-b .quote { width: 136px; height: 20px; gap: 7px; }
.win-b .sum th, .win-b .sum td { height: 19px; }
.win-b .pane { margin-top: 3px; }
.win-b .list tbody tr { height: 17px; }
.win-b .view { height: 198px; }
.win-b .list tbody { border-bottom: 1px solid #d2d2d2; }
.win-b .vbar { margin: 17px 0 19px; }
.win-b .hbar { width: 349px; margin-left: 18px; }
.win-b .notice { height: 27px; }
.win-b .dn { border-width: 6px 3px 0; }
.win-b .up { border-width: 0 3px 6px; }

.w16 { width: 16px; } .w25 { width: 25px; } .w26 { width: 26px; } .w33 { width: 33px; } .w43 { width: 43px; }
.w57 { width: 57px; } .w62 { width: 62px; } .w64 { width: 64px; } .w65 { width: 65px; } .w69 { width: 69px; }
.w70 { width: 70px; } .w74 { width: 74px; } .w75 { width: 75px; } .w77 { width: 77px; } .w80 { width: 80px; }
.w84 { width: 84px; } .w86 { width: 86px; } .w95 { width: 95px; }

.cursor { position: absolute; right: -11px; top: 147px; width: 24px; height: 28px; }
.caption {
  position: absolute; left: 46px; top: 690px;
  font: bold 49px/54px "Open Sans", "Noto Sans CJK KR", sans-serif;
  color: #fff; white-space: nowrap;
  -webkit-text-stroke: 5px #000; paint-order: stroke fill;
}
.caption span { font-size: 44px; font-weight: 800; }

/* Namuh */
.namuh .desk { background: #788389; }
.ntop { display: flex; align-items: center; height: 19px; padding: 0 1px 0 4px; background: linear-gradient(#0d86d8, #0a7bd0); color: #fff; white-space: nowrap; }
.logo { width: 16px; height: 16px; }
.ntop h1 { margin: 0 auto 0 4px; font-weight: bold; font-size: 12px; }
.line { margin-right: 33px; }
.npages { display: flex; gap: 2px; margin-right: 14px; }
.npages button { width: 17px; height: 15px; line-height: 13px; border-color: #0b5ca6; border-radius: 3px; background: #1b79c4; color: #0a3c78; }
.npages .on { background: #d6ecfb; }
.mons { display: flex; gap: 3px; margin-right: 11px; }
.mons svg { width: 14px; height: 15px; color: #3f89c2; }
.mons .m2 { color: #937b74; }
.mons .m3 { color: #4a9a72; }
.mons .m4 { color: #2d62b5; }
.green { display: flex; align-items: center; justify-content: center; gap: 6px; width: 72px; height: 17px; border: 1px solid #4b7a12; background: linear-gradient(#a4db2c, #85bf1c); color: #1d3300; }
.nbtns { display: flex; gap: 4px; margin-left: 14px; }
.nbtns button { width: 20px; height: 16px; border: 0; background: none; color: #fff; display: grid; place-items: center; }
.nbtns svg { width: 18px; height: 16px; }
.nmenu { display: flex; align-items: center; gap: 12px; height: 22px; padding: 0 15px; background: #1c3f80; color: #eef3fa; white-space: nowrap; }
.nmenu button { width: 58px; height: 18px; margin: 2px 4px 0 0; border: 0; border-radius: 3px 3px 0 0; background: linear-gradient(#6cc0f2, #3f9ade); color: #0a2858; font-weight: bold; font-size: 12px; }
.nmenu button .tri { vertical-align: middle; color: #14509a; }
.nmenu svg { width: 10px; height: 10px; margin-left: auto; color: #4fb1f0; }
.ntools { display: flex; align-items: center; height: 43px; padding-left: 16px; background: linear-gradient(#eceef0, #cfd3d8 80%, #b8bdc3); }
.code { width: 43px; height: 19px; border: 1px solid #555; padding: 0 3px; font-size: 14px; background: #fff; }
.ntools .drop { width: 17px; height: 19px; margin: 0 9px 0 2px; border-color: #888; background: #f4f4f4; }
.ntools .drop .tri { vertical-align: middle; }
.mag { width: 14px; height: 15px; color: #4f9bd6; }
.sep { width: 1px; height: 33px; margin: 0 10px 0 14px; background: #aaa; }
.ncat { display: flex; align-items: center; gap: 9px; width: 78px; height: 19px; padding: 0 5px; border-color: #888; border-radius: 2px; background: #f6f6f6; flex: none; }
.np { width: 22px; height: 22px; margin: 0 13px 0 5px; }
.nkeys { display: flex; gap: 4px; }
.nkeys button { width: 36px; height: 31px; line-height: 15px; border-color: #b3bac2; border-radius: 2px; background: #e8ebee; color: #17365f; }
.dock { display: flex; align-items: center; gap: 2px; width: 113px; height: 39px; margin-left: auto; padding: 2px; border-radius: 4px 0 0 4px; background: #777b80; color: #fff; }
.ff { display: flex; align-self: flex-start; margin-top: 2px; }
.d1 { display: grid; justify-items: center; width: 28px; height: 35px; border-radius: 3px; background: #d8dadd; }
.d1 svg { width: 17px; height: 15px; margin-top: 2px; }
.d1 b { font: bold 9px/12px "Liberation Sans", "DejaVu Sans", sans-serif; color: #2c6fb5; }
.d2 { flex: 1; display: grid; grid-template-columns: repeat(3, 1fr); place-items: center; height: 35px; border-radius: 3px; background: #d8dadd; }
.d2 svg { width: 15px; height: 15px; }

.win-c { left: 204px; top: 25px; width: 491px; padding: 1px 3px 1px 4px; border: 1px solid #4a555c; background: #d9dadc; }
.ctitle { display: flex; align-items: center; height: 22px; margin: -1px -3px 0 -4px; padding: 0 6px 0 3px; background: linear-gradient(#1f90de, #0e78c8); color: #fff; }
.ctitle h2 { margin: 0 auto 0 3px; font-weight: bold; }
.ctitle .green { width: 81px; height: 16px; gap: 4px; margin-right: 4px; }
.ctitle .green svg { width: 13px; height: 13px; }
.cbtns { display: flex; gap: 1px; }
.cbtns button { width: 15px; height: 15px; line-height: 12px; border-color: #5cb2ec; border-radius: 2px; background: #2385cf; color: #fff; display: grid; place-items: center; font-size: 12px; }
.cbtns .on { background: #0c4a8c; }
.cbtns svg { width: 13px; height: 12px; }
.cacct { display: flex; align-items: center; height: 26px; padding: 0 3px 0 2px; color: #333; white-space: nowrap; }
.cacct select { width: 115px; height: 19px; margin: 0 6px 0 4px; padding: 0 3px; color: #111; }
.owner { width: 66px; overflow: hidden; }
.csell { width: 64px; height: 20px; margin-right: 2px; border: 0; background: #4479c4; color: #fff; font-weight: bold; }
.plain { width: 36px; height: 20px; border-color: #999; background: #fff; color: #222; }
.csum { width: 100%; }
.csum th, .csum td { height: 20px; border: 1px solid #888; color: #333; }
.csum th { background: #e2e3e4; white-space: nowrap; }
.csum .mark { background: #ecedd8; }
.csum td { background: #fff; }
.csum td.r { color: #b8231b; }
.p1 { width: 60px; } .p2 { width: 97px; } .p3 { width: 66px; } .p4 { width: auto; }
.win-c .pane { border: 1px solid #888; margin-right: 1px; }
.win-c .view { height: 222px; }
.win-c .list tbody tr { height: 20px; background: #fff; }
.win-c .list thead tr { height: 19px; }
.win-c .list th { color: #111; background: #e4e5e6; }
.win-c .list .tight { font-size: 12px; }
.win-c .list td { border-bottom: 1px solid #e2e2e2; padding: 0 1px 0 2px; }
.win-c .list td:not(.r):not(.b) { color: #111; }
.win-c .list .hot { background: #fde0a0; }
.win-c .list td:first-child { padding: 0; }
.win-c .vbar { margin: 16px 0 18px; }
.win-c .hbar { width: 110px; margin-left: 17px; }
.cnote { display: flex; align-items: center; justify-content: space-between; height: 22px; color: #333; white-space: nowrap; }
.cnote .plain { width: 31px; height: 18px; line-height: 14px; }
.cstatus { display: flex; align-items: center; gap: 4px; height: 19px; margin: 2px -3px 0 -4px; padding: 0 15px 0 6px; border-top: 1px solid #f4f4f4; background: linear-gradient(#dcdde0, #c2c6cb); }
.cstatus svg { width: 14px; height: 13px; }
.cstatus button { width: 39px; height: 14px; line-height: 12px; border-color: #aaa; border-radius: 2px; background: #f4f5f7; color: #1c4d94; font-size: 12px; }
.cstatus button svg { width: 8px; height: 8px; }
```
